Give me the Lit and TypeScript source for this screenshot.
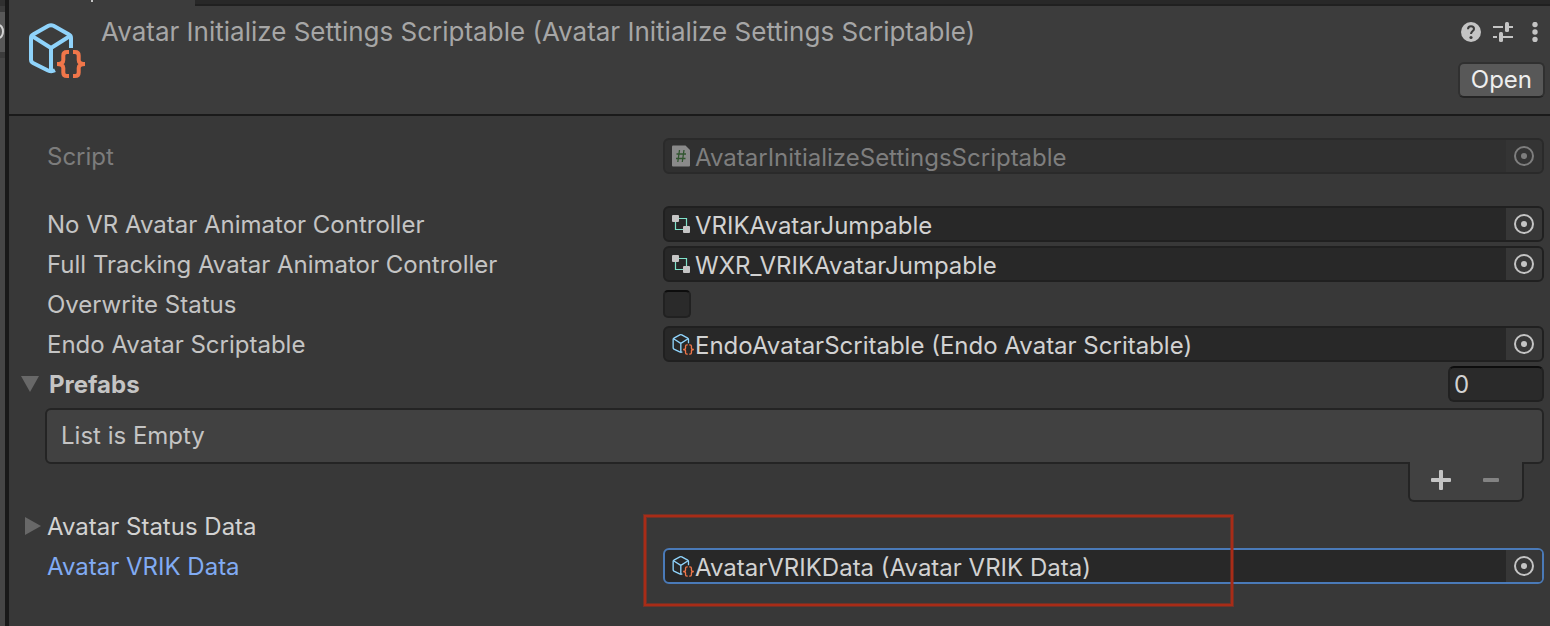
import { LitElement, html, css } from "lit";
import { customElement, property } from "lit/decorators.js";

const scriptableIcon = (size: number, line: number) => html`
  <svg width=${size} height=${size} viewBox="0 0 60 60" fill="none" aria-hidden="true">
    <g stroke="#8fd3fb" stroke-width=${line} stroke-linejoin="round">
      <path d="M43 27V17Q43 14.500 41 13.500L25.500 4.800Q23 3.500 20.500 4.800L5 13.500Q3 14.500 3 17V38.500Q3 41 5 42L20 49.500Q23.500 51 27 49.300" />
      <path d="M4 15L23 27L42 15M23 27V49.500" />
    </g>
    <g stroke="#f0764a" stroke-width=${line}>
      <path d="M41 31H39Q35.300 31 35.300 34.500V39Q35.300 43 29 43Q35.300 43 35.300 47V51.500Q35.300 55 39 55H41" />
      <path d="M45 31H47Q50.700 31 50.700 34.500V39Q50.700 43 57 43Q50.700 43 50.700 47V51.500Q50.700 55 47 55H45" />
    </g>
  </svg>`;

const controllerIcon = html`
  <svg width="18" height="18" viewBox="0 0 18 18" fill="none" aria-hidden="true">
    <path d="M7 3.500H14.500V11M3.500 7V14.500H11" stroke="#7fe3cb" stroke-width="1.200" />
    <rect width="7" height="7" rx="1" fill="#c6c6c6" />
    <rect x="11" y="11" width="7" height="7" rx="1" fill="#c6c6c6" />
  </svg>`;

const scriptIcon = html`
  <svg width="18" height="22" viewBox="0 0 18 22" fill="none" aria-hidden="true">
    <path d="M1 .5H13.500L18 5V20.500Q18 21.500 17 21.500H1Q0 21.500 0 20.500V1.500Q0 .5 1 .5Z" fill="#8a8a8a" />
    <path d="M7.500 5L5.800 17M12 5L10.300 17M4.500 9H14M4 13.500H13.500" stroke="#31552f" stroke-width="1.300" />
  </svg>`;

const icons: Record<string, unknown> = {
  script: scriptIcon,
  controller: controllerIcon,
  scriptable: scriptableIcon(23, 3.5),
};

@customElement("object-field")
class ObjectField extends LitElement {
  @property() label = "";
  @property() value = "";
  @property() icon = "script";
  @property({ type: Boolean, reflect: true }) disabled = false;
  @property({ type: Boolean, reflect: true }) selected = false;

  static styles = css`
    :host { display: block; }
    .row { display: grid; grid-template-columns: 41.15% minmax(0, 1fr); align-items: center; }
    label { padding-top: 2px; color: #c4c4c4; line-height: 34px; white-space: nowrap; }
    .cell { position: relative; }
    .field {
      display: flex; align-items: stretch; box-sizing: border-box; height: 36px;
      border: 2px solid #202020; border-radius: 6px; background: #282828; overflow: hidden;
    }
    .icon { flex: none; width: 30px; display: flex; align-items: center; padding-left: 7px; box-sizing: border-box; }
    .icon svg { flex: none; }
    input {
      flex: 1; min-width: 0; border: 0; outline: 0; margin: 0; padding: 3px 0 0; background: none;
      font: inherit; color: #d2d2d2;
    }
    button {
      flex: none; width: 36px; border: 0; padding: 0; margin: 0; background: #373737; color: #c4c4c4;
      display: grid; place-items: center;
    }
    :host([disabled]) label { color: #7c7c7c; }
    :host([disabled]) .field { background: #303030; border-color: #2a2a2a; }
    :host([disabled]) input { color: #7e7e7e; }
    :host([disabled]) button { background: #343434; color: #7e7e7e; }
    :host([selected]) label { color: #81abf3; }
    :host([selected]) .field { border-color: #4a7ab8; }
    .highlight {
      position: absolute; left: -19px; top: -33px; width: 66.9%; height: 91px;
      box-sizing: border-box; border: 2px solid #a82c17; pointer-events: none;
      box-shadow: 0 0 0 1px #a82c1780, inset 0 0 0 1px #a82c1780;
    }
  `;

  render() {
    return html`<div class="row">
      <label for="value">${this.label}</label>
      <div class="cell">
        <div class="field">
          <span class="icon">${icons[this.icon]}</span>
          <input id="value" readonly .value=${this.value} ?disabled=${this.disabled} />
          <button aria-label="Select object" ?disabled=${this.disabled}>
            <svg width="20" height="20" viewBox="0 0 20 20" fill="none" aria-hidden="true">
              <circle cx="10" cy="10" r="9" stroke="currentColor" stroke-width="2" />
              <circle cx="10" cy="10" r="3" fill="currentColor" />
            </svg>
          </button>
        </div>
        ${this.selected ? html`<div class="highlight"></div>` : ""}
      </div>
    </div>`;
  }
}

@customElement("app-root")
class AppRoot extends LitElement {
  static styles = css`
    :host {
      display: flex; min-height: 100vh; background: #383838; color: #c4c4c4;
      font: 24px/36px Inter, "Liberation Sans", sans-serif; overflow: hidden;
    }
    * { box-sizing: border-box; }
    button { font: inherit; color: inherit; background: none; border: 0; padding: 0; margin: 0; }
    svg { display: block; }
    .neighbour { flex: none; width: 5px; background: #464646; overflow: hidden; }
    .neighbour-bar { height: 12px; background: #303030; border-bottom: 6px solid #3c3c3c; }
    .neighbour-field { height: 40px; padding-top: 12px; background: #585858; }
    .neighbour-gap { height: 6px; background: #3c3c3c; }
    .divider { flex: none; width: 4px; background: #191919; }
    .inspector { flex: 1; min-width: 0; }
    .tabs { display: flex; height: 6px; background: #282828; }
    .tab { width: 186px; padding-left: 82px; background: #3c3c3c; }
    .tab-mark { width: 2px; height: 2px; background: #c4c4c4; }
    .tab-rest { flex: 1; border-bottom: 2px solid #202020; }
    header {
      display: flex; gap: 16px; height: 110px; padding: 0 5px 0 19px; background: #3c3c3c; border-bottom: 2px solid #1a1a1a;
    }
    .asset { padding-top: 15px; width: 57px; flex: none; }
    h1 {
      flex: 1; min-width: 0; margin: 0; padding-top: 8px; font-size: 26px; line-height: 36px; font-weight: 400;
      color: #a6a6a6; white-space: nowrap;
    }
    .actions { display: flex; flex-direction: column; align-items: flex-end; gap: 20px; padding-top: 16px; }
    .tools { display: flex; gap: 12px; color: #c4c4c4; }
    .open {
      height: 36px; padding: 0 11px; border: 2px solid #303030; border-bottom-color: #242424; border-radius: 6px;
      background: #585858; color: #eee; line-height: 32px;
    }
    main { display: flex; flex-direction: column; gap: 4px; padding: 22px 6px 0 38px; }
    .script { margin-bottom: 28px; }
    .row { display: grid; grid-template-columns: 41.15% minmax(0, 1fr); align-items: center; height: 36px; }
    .row label, .fold span { padding-top: 2px; line-height: 34px; }
    .check {
      appearance: none; width: 28px; height: 28px; margin: 0; background: #2a2a2a;
      border: 2px solid #212121; border-top-color: #0d0d0d; border-radius: 5px;
    }
    .foldout { display: flex; align-items: center; justify-content: space-between; height: 36px; }
    .fold { display: flex; align-items: center; gap: 10px; margin-left: -26px; }
    .fold svg { fill: #686868; }
    .fold.closed { gap: 6px; margin-left: -22px; color: #d2d2d2; }
    .bold { font-weight: 700; }
    .count {
      width: 96px; height: 36px; padding: 2px 4px 0; font: inherit; color: #d2d2d2; background: #2a2a2a;
      border: 2px solid #212121; border-top-color: #0d0d0d; border-radius: 6px; outline: 0;
    }
    .list { margin: 2px 0 2px -2px; }
    .empty {
      height: 56px; padding-left: 14px; line-height: 52px; background: #414141; border: 2px solid #242424; border-radius: 6px;
    }
    .list-buttons {
      position: relative; display: flex; width: 116px; height: 40px; margin: -2px 20px 0 auto; padding: 0 6px 2px;
      background: #414141; border: 2px solid #242424; border-top: 0; border-radius: 0 0 6px 6px;
    }
    .list-buttons button { flex: 1; display: grid; place-items: center; }
  `;

  render() {
    return html`
      <div class="neighbour">
        <div class="neighbour-bar"></div>
        <div class="neighbour-field">
          <svg width="5" height="15" viewBox="0 0 5 15" fill="none" aria-hidden="true">
            <ellipse cx="-1.500" cy="7.500" rx="4.500" ry="6.500" stroke="#d2d2d2" stroke-width="2" />
          </svg>
        </div>
        <div class="neighbour-gap"></div>
      </div>
      <div class="divider"></div>
      <div class="inspector">
        <div class="tabs">
          <div class="tab"><div class="tab-mark"></div></div>
          <div class="tab-rest"></div>
        </div>
        <header>
          <div class="asset">${scriptableIcon(60, 4)}</div>
          <h1>Avatar Initialize Settings Scriptable (Avatar Initialize Settings Scriptable)</h1>
          <div class="actions">
            <div class="tools">
              <button aria-label="Help">
                <svg width="20" height="20" viewBox="0 0 20 20" fill="none">
                  <circle cx="10" cy="10" r="10" fill="currentColor" />
                  <path d="M7 7.300C7 5.200 8.300 4.200 10 4.200C11.800 4.200 13 5.300 13 6.900C13 9 10 9.200 10 12" stroke="#3c3c3c" stroke-width="2" />
                  <circle cx="10" cy="15.500" r="1.600" fill="#3c3c3c" />
                </svg>
              </button>
              <button aria-label="Presets">
                <svg width="20" height="20" viewBox="0 0 20 20" fill="currentColor">
                  <path d="M0 4H10V6H0ZM16 4H20V6H16ZM0 14H4V16H0ZM10 14H20V16H10Z" />
                  <rect x="12" width="4" height="10" rx="1.500" />
                  <rect x="6" y="10" width="4" height="10" rx="1.500" />
                </svg>
              </button>
              <button aria-label="More">
                <svg width="20" height="20" viewBox="0 0 20 20" fill="currentColor">
                  <circle cx="10" cy="2.500" r="2.700" /><circle cx="10" cy="10" r="2.700" /><circle cx="10" cy="17.500" r="2.700" />
                </svg>
              </button>
            </div>
            <button class="open">Open</button>
          </div>
        </header>
        <main>
          <object-field class="script" label="Script" icon="script" value="AvatarInitializeSettingsScriptable" disabled></object-field>
          <object-field label="No VR Avatar Animator Controller" icon="controller" value="VRIKAvatarJumpable"></object-field>
          <object-field label="Full Tracking Avatar Animator Controller" icon="controller" value="WXR_VRIKAvatarJumpable"></object-field>
          <div class="row">
            <label for="overwrite">Overwrite Status</label>
            <input id="overwrite" class="check" type="checkbox" />
          </div>
          <object-field label="Endo Avatar Scriptable" icon="scriptable" value="EndoAvatarScritable (Endo Avatar Scritable)"></object-field>
          <div class="foldout">
            <button class="fold" aria-expanded="true">
              <svg width="18" height="16" viewBox="0 0 18 16"><path d="M0 0H18L9 16Z" /></svg>
              <span class="bold">Prefabs</span>
            </button>
            <input class="count" type="text" aria-label="Prefabs size" value="0" />
          </div>
          <div class="list">
            <div class="empty">List is Empty</div>
            <div class="list-buttons">
              <button aria-label="Add">
                <svg width="20" height="20" viewBox="0 0 20 20" fill="#c4c4c4">
                  <rect x="8" width="4" height="20" rx="1" /><rect y="8" width="20" height="4" rx="1" />
                </svg>
              </button>
              <button aria-label="Remove">
                <svg width="16" height="4" viewBox="0 0 16 4" fill="#838383"><rect width="16" height="4" rx="1" /></svg>
              </button>
            </div>
          </div>
          <div class="foldout">
            <button class="fold closed" aria-expanded="false">
              <svg width="16" height="18" viewBox="0 0 16 18"><path d="M0 0V18L16 9Z" /></svg>
              <span>Avatar Status Data</span>
            </button>
          </div>
          <object-field label="Avatar VRIK Data" icon="scriptable" value="AvatarVRIKData (Avatar VRIK Data)" selected></object-field>
        </main>
      </div>
    `;
  }
}
